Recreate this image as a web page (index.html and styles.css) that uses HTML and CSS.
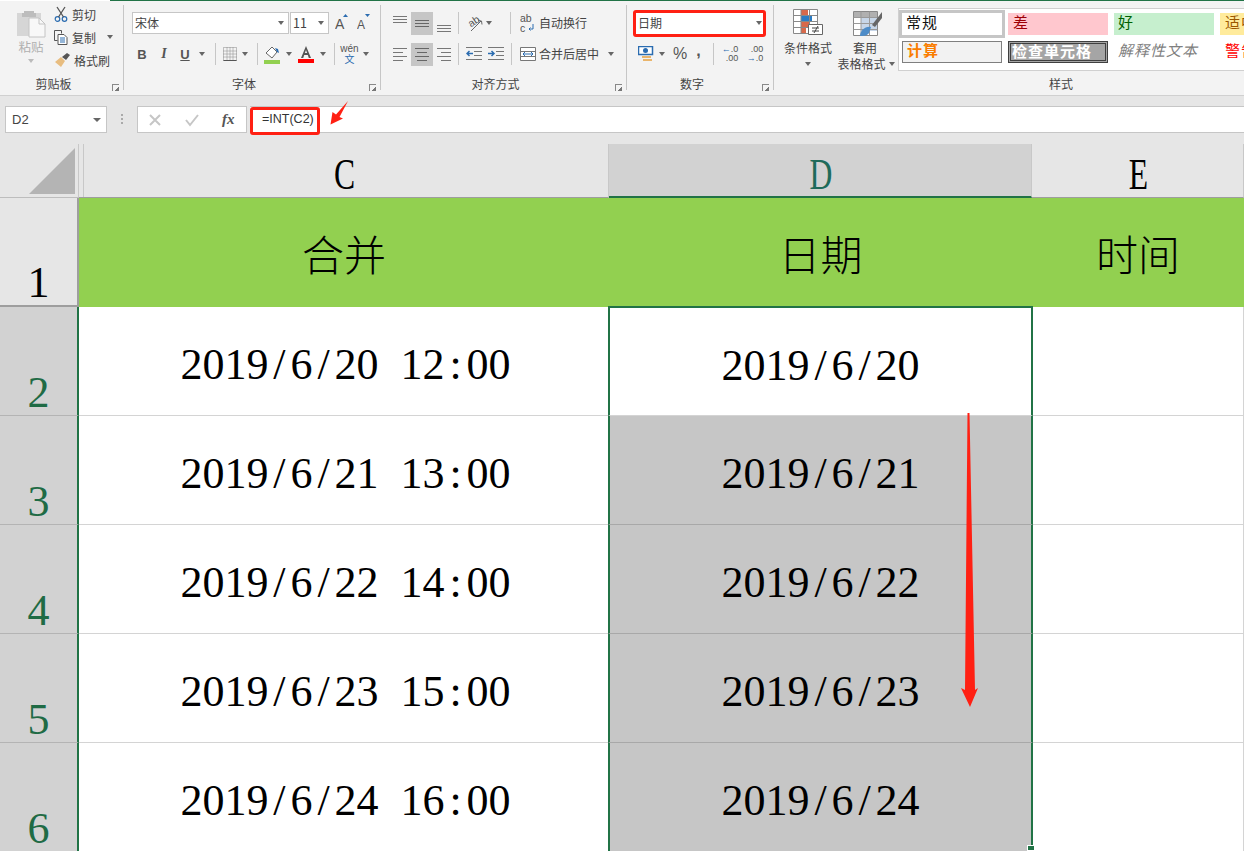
FILE: index.html
```html
<!DOCTYPE html>
<html lang="zh">
<head>
<meta charset="utf-8">
<title>Excel</title>
<link rel="stylesheet" href="styles.css">
</head>
<body>
<div class="app">
  <div class="topline"></div>
  <div class="ribbon">
    <section class="group g-clip">
      <div class="clip-body">
        <div class="paste">
          <svg width="30" height="29" viewBox="0 0 30 29"><path d="M1 4h24v23H1z" fill="#d6d6d6"/><path d="M8 4V2h10v2h2v4H6V4z" fill="#bdbdbd"/><path d="M13 9h10l6 6v13H13z" fill="#f8f8f8" stroke="#c4c4c4"/><path d="M23 9v6h6" fill="none" stroke="#c4c4c4"/></svg>
          <span class="paste-label">粘贴</span>
          <i class="caret caret-light"></i>
        </div>
        <div class="clip-list">
          <div class="clip-item">
            <svg width="14" height="16" viewBox="0 0 14 16"><circle cx="3.5" cy="13" r="2.3" fill="none" stroke="#2b6cb0" stroke-width="1.2"/><circle cx="10.5" cy="13" r="2.3" fill="none" stroke="#2b6cb0" stroke-width="1.2"/><path d="M4.5 11 11 1M9.5 11 3 1" stroke="#555" stroke-width="1.3" fill="none"/></svg>
            <span>剪切</span>
          </div>
          <div class="clip-item">
            <svg width="14" height="15" viewBox="0 0 14 15"><path d="M.5.500h7v3M.5.500v10h3" fill="none" stroke="#555"/><path d="M4 4.500h6l3 3v7H4z" fill="#fff" stroke="#555"/><path d="M6 8h5M6 10h5M6 12h5" stroke="#2b6cb0"/></svg>
            <span>复制</span><i class="caret caret-copy"></i>
          </div>
          <div class="clip-item">
            <svg width="16" height="14" viewBox="0 0 16 14"><path d="M1 9 7 4l4 4-4 6z" fill="#e8bd80"/><path d="M8 4l5-4 3 2-4 5z" fill="#555"/></svg>
            <span>格式刷</span>
          </div>
        </div>
      </div>
      <div class="group-label">剪贴板</div>
      <i class="launcher"></i>
    </section>

    <section class="group g-font">
      <div class="font-row1">
        <div class="select select-font"><span>宋体</span><i class="caret"></i></div>
        <div class="select select-size"><span>11</span><i class="caret"></i></div>
        <svg class="size-btn" width="14" height="18" viewBox="0 0 14 18"><text x="0" y="15" class="icon-a">A</text><path d="M8 3l2.500-3L13 3z" fill="#2b6cb0"/></svg>
        <svg class="size-btn" width="14" height="18" viewBox="0 0 14 18"><text x="0" y="15" class="icon-a small">A</text><path d="M8 0l2.500 3L13 0z" fill="#2b6cb0"/></svg>
      </div>
      <div class="font-row2">
        <b class="fmt">B</b><i class="fmt fmt-i">I</i><u class="fmt">U</u><i class="caret"></i><i class="sep"></i>
        <svg width="14" height="14" viewBox="0 0 14 14"><path d="M.5.500h13v13H.5zM7 .5v13M.5 7h13M4 .5v13M10 .5v13M.5 4h13M.5 10h13" fill="none" stroke="#888" stroke-dasharray="1 1"/><path d="M.5 13.500h13" stroke="#555"/></svg><i class="caret"></i><i class="sep"></i>
        <svg width="17" height="19" viewBox="0 0 17 19"><path d="M2 8 8 2l5 5-5 6z" fill="#fff" stroke="#666"/><path d="M11 3l3 1 1 4-2-1z" fill="#2b6cb0"/><path d="M0 15h16v4H0z" fill="#92d050"/></svg><i class="caret"></i>
        <svg width="16" height="18" viewBox="0 0 16 18"><path d="M3 13 8 1l5 12h-2.200l-1-3H6.200l-1 3zM6.900 8h2.200L8 5z" fill="#555"/><path d="M0 14h16v4H0z" fill="#f00"/></svg><i class="caret"></i><i class="sep"></i>
        <div class="wen"><span class="wen-top">wén</span><span class="wen-bot">文</span></div><i class="caret"></i>
      </div>
      <div class="group-label">字体</div>
      <i class="launcher"></i>
    </section>

    <section class="group g-align">
      <div class="align-row">
        <svg width="14" height="20" viewBox="0 0 14 20"><path d="M0 3.500h14M0 6.500h14M0 9.500h14" stroke="#777"/></svg>
        <div class="pressed"><svg width="14" height="20" viewBox="0 0 14 20"><path d="M0 7.500h14M0 10.500h14M0 13.500h14" stroke="#666"/></svg></div>
        <svg width="14" height="20" viewBox="0 0 14 20"><path d="M0 12.500h14M0 15.500h14M0 18.500h14" stroke="#777"/></svg>
        <i class="sep"></i>
        <svg width="20" height="20" viewBox="0 0 20 20"><text x="3" y="12" class="icon-ab" transform="rotate(-35 8 10)">ab</text><path d="M5 18 15 8M12 7.500l3.500.5.500 3.500" fill="none" stroke="#666"/></svg>
        <i class="caret caret-orient"></i>
        <i class="sep"></i>
        <svg width="16" height="20" viewBox="0 0 16 20"><text x="0" y="9" class="icon-ab">ab</text><text x="0" y="19" class="icon-ab">c</text><path d="M13 11v5H9M10.500 14.500 9 16l1.500 1.500" fill="none" stroke="#2b6cb0"/></svg>
        <span class="align-text">自动换行</span>
      </div>
      <div class="align-row">
        <svg width="14" height="20" viewBox="0 0 14 20"><path d="M0 4.500h14M0 8.500h10M0 12.500h14M0 16.500h10" stroke="#777"/></svg>
        <div class="pressed"><svg width="14" height="20" viewBox="0 0 14 20"><path d="M0 4.500h14M2 8.500h10M0 12.500h14M2 16.500h10" stroke="#666"/></svg></div>
        <svg width="14" height="20" viewBox="0 0 14 20"><path d="M0 4.500h14M4 8.500h10M0 12.500h14M4 16.500h10" stroke="#777"/></svg>
        <i class="sep"></i>
        <svg width="16" height="14" viewBox="0 0 16 14"><path d="M0 .5h16M8 4.500h8M8 8.500h8M0 12.500h16" stroke="#777"/><path d="M7 6.500H1M3.500 4 1 6.500 3.500 9" stroke="#2b6cb0" stroke-width="1.500" fill="none"/></svg>
        <svg class="indent2" width="16" height="14" viewBox="0 0 16 14"><path d="M0 .5h16M8 4.500h8M8 8.500h8M0 12.500h16" stroke="#777"/><path d="M0 6.500h6M3.500 4 6 6.500 3.500 9" stroke="#2b6cb0" stroke-width="1.500" fill="none"/></svg>
        <i class="sep sep-merge"></i>
        <svg width="16" height="14" viewBox="0 0 16 14"><path d="M.5.500h15v13H.5zM.5 4.500h15M.5 9.500h15" fill="#fff" stroke="#777"/><path d="M3 7h10M5 5 3 7l2 2M11 5l2 2-2 2" fill="none" stroke="#2b6cb0"/></svg>
        <span class="align-text">合并后居中</span><i class="caret caret-merge"></i>
      </div>
      <div class="group-label">对齐方式</div>
      <i class="launcher"></i>
    </section>

    <section class="group g-num">
      <div class="select select-num"><span>日期</span><i class="caret"></i></div>
      <div class="num-row">
        <svg width="17" height="16" viewBox="0 0 17 16"><path d="M.5.500h14v8H.5z" fill="#fff" stroke="#2b6cb0" stroke-width="1.500"/><circle cx="7.500" cy="4.500" r="2.500" fill="#2b6cb0"/><path d="M4 10h9v2H4zM5 13h9v2H5z" fill="#eab56b"/></svg><i class="caret"></i>
        <span class="pct">%</span>
        <span class="comma">,</span>
        <i class="sep"></i>
        <div class="dec"><span><em>←</em>.0</span><span>.00</span></div>
        <div class="dec"><span>.00</span><span><em>→</em>.0</span></div>
      </div>
      <div class="group-label">数字</div>
      <i class="launcher"></i>
    </section>

    <section class="group g-style">
      <div class="style-body">
        <div class="big-btn btn-cond">
          <svg width="30" height="26" viewBox="0 0 30 26"><path d="M.5.500h24v24H.5z" fill="#fff" stroke="#888"/><path d="M8 1h7v6H8zM8 19h5v5H8z" fill="#d8694a"/><path d="M8 7h11v5H8z" fill="#2b7cc4"/><path d="M8 12h9v6H8z" fill="#d8694a"/><path d="M8 .5v24M16.500.5v24M.5 6.500h24M.5 12.500h24M.5 18.500h24" stroke="#888" fill="none"/><path d="M15.500 15.500h14v10h-14z" fill="#fff" stroke="#666"/><path d="M19 19h7M19 22h7M25 17l-4 7" stroke="#444" fill="none"/></svg>
          <span class="big-text">条件格式</span>
          <i class="caret"></i>
        </div>
        <div class="big-btn btn-table">
          <svg width="30" height="28" viewBox="0 0 30 28"><path d="M.5 2.500h24v24H.5z" fill="#fff" stroke="#888"/><path d="M1 3h23v5H1z" fill="#b0b0b0"/><path d="M8 8h16v14H8z" fill="#c7d6e8"/><path d="M8 2.500v24M16.500 2.500v24M.5 8.500h24M.5 14.500h24M.5 20.500h24" stroke="#999" fill="none"/><path d="M19 16 29 3v6l-7 9z" fill="#666"/><path d="M7 27c0-5 5-10 11-9l-2 6c-2 3-6 3-9 3z" fill="#4d8cc8"/></svg>
          <span class="big-text">套用</span>
          <span class="big-text big-line">表格格式<i class="caret caret-table"></i></span>
        </div>
        <div class="gallery">
          <div class="gal-cell gal-normal">常规</div>
          <div class="gal-cell gal-bad">差</div>
          <div class="gal-cell gal-good">好</div>
          <div class="gal-cell gal-neutral">适中</div>
          <div class="gal-cell gal-calc">计算</div>
          <div class="gal-cell gal-check">检查单元格</div>
          <div class="gal-cell gal-note">解释性文本</div>
          <div class="gal-cell gal-warn">警告文本</div>
        </div>
      </div>
      <div class="group-label label-style">样式</div>
    </section>
  </div>

  <div class="formula-strip">
    <div class="name-box"><span>D2</span><i class="caret caret-name"></i></div>
    <div class="dots"></div>
    <div class="fx-box">
      <svg width="14" height="14" viewBox="0 0 14 14"><path d="M2 2l10 10M12 2 2 12" stroke="#c6c6c6" stroke-width="2"/></svg>
      <svg width="16" height="14" viewBox="0 0 16 14"><path d="M2 7l4 5 8-10" stroke="#c6c6c6" stroke-width="2" fill="none"/></svg>
      <span class="fx">fx</span>
    </div>
    <div class="formula-input"><span class="formula-text">=INT(C2)</span></div>
  </div>

  <div class="sheet">
    <div class="corner"><svg width="46" height="46" viewBox="0 0 46 46"><path d="M46 0v46H0z" fill="#b4b4b4"/></svg></div>
    <div class="col-head col-first"><span>C</span></div>
    <div class="col-head col-active"><span>D</span></div>
    <div class="col-head"><span>E</span></div>

    <div class="row-head row-first">1</div>
    <div class="title">合并</div>
    <div class="title">日期</div>
    <div class="title">时间</div>

    <div class="row-head row-sel">2</div>
    <div class="cell cell-c">2019<s>/</s>6<s>/</s>20 12<s>:</s>00</div>
    <div class="cell sel-top">2019<s>/</s>6<s>/</s>20</div>
    <div class="cell blank"></div>

    <div class="row-head row-sel">3</div>
    <div class="cell cell-c">2019<s>/</s>6<s>/</s>21 13<s>:</s>00</div>
    <div class="cell sel-fill">2019<s>/</s>6<s>/</s>21</div>
    <div class="cell blank"></div>

    <div class="row-head row-sel">4</div>
    <div class="cell cell-c">2019<s>/</s>6<s>/</s>22 14<s>:</s>00</div>
    <div class="cell sel-fill">2019<s>/</s>6<s>/</s>22</div>
    <div class="cell blank"></div>

    <div class="row-head row-sel">5</div>
    <div class="cell cell-c">2019<s>/</s>6<s>/</s>23 15<s>:</s>00</div>
    <div class="cell sel-fill">2019<s>/</s>6<s>/</s>23</div>
    <div class="cell blank"></div>

    <div class="row-head row-sel">6</div>
    <div class="cell cell-c">2019<s>/</s>6<s>/</s>24 16<s>:</s>00</div>
    <div class="cell sel-fill sel-last">2019<s>/</s>6<s>/</s>24</div>
    <div class="cell blank"></div>
  </div>

  <div class="mark mark-num"></div>
  <div class="mark mark-formula"></div>
  <svg class="arrow-small" width="19" height="26" viewBox="0 0 19 26"><path d="M18 1 9.500 17l3.500 1.500L.5 24.500 2.500 12 6 14.500z" fill="#ff2013"/></svg>
  <svg class="arrow-long" width="20" height="298" viewBox="0 0 20 298"><path d="M8.500 0h2L16 277l3-2-8 19-9-19 4 2z" fill="#ff2013"/></svg>
</div>
</body>
</html>
```

FILE: styles.css
```css
* { box-sizing: border-box; }
html, body { margin: 0; padding: 0; height: 851px; overflow: hidden; background: #fff; }
body { font-family: "Noto Sans CJK SC", "Liberation Sans", sans-serif; font-size: 12px; color: #444; }
.app { position: relative; width: 1244px; height: 851px; overflow: hidden; }

.topline { height: 1px; margin-left: 110px; background: #217346; }
.ribbon { display: flex; height: 95px; background: #f3f3f3; border-bottom: 1px solid #d0d0d0; }
.group { position: relative; height: 85px; margin-top: 4px; border-right: 1px solid #c6c6c6; flex: none; display: flex; flex-direction: column; }
.group-label { position: absolute; left: 0; right: 16px; top: 70px; text-align: center; line-height: 18px; font-size: 12px; color: #444; }
.label-style { left: 50px; right: 0; }
.launcher { position: absolute; right: 4px; top: 79px; width: 7px; height: 7px; border-left: 1px solid #888; border-top: 1px solid #888; background: linear-gradient(135deg, transparent 60%, #777 60%); }
.caret { display: block; flex: none; width: 0; height: 0; border-left: 3.5px solid transparent; border-right: 3.5px solid transparent; border-top: 4px solid #666; }
.caret-light { border-top-color: #bbb; margin-top: 3px; }
.sep { display: block; width: 1px; height: 22px; background: #c6c6c6; }

.g-clip { width: 124px; }
.clip-body { display: flex; padding: 4px 0 0 16px; }
.paste { width: 30px; display: flex; flex-direction: column; align-items: center; }
.paste-label { line-height: 18px; color: #b0b0b0; font-size: 12.500px; }
.clip-list { margin: -4px 0 0 8px; display: flex; flex-direction: column; gap: 5px; }
.clip-item { display: flex; align-items: center; gap: 4px; height: 18px; width: 66px; color: #444; white-space: nowrap; }
.clip-item svg { flex: none; }
.caret-copy { margin-left: 7px; }

.g-font { width: 257px; padding: 7px 0 0 8px; }
.font-row1 { display: flex; align-items: center; height: 22px; }
.select { display: flex; align-items: center; justify-content: space-between; height: 22px; background: #fff; border: 1px solid #c6c6c6; padding: 0 4px 0 2px; color: #444; line-height: 18px; }
.select-font { width: 157px; }
.select-size { width: 39px; margin-left: 1px; font-size: 12.500px; }
.size-btn { margin-left: 6px; flex: none; }
.size-btn + .size-btn { margin-left: 8px; }
.icon-a { font: 14px "Liberation Sans", sans-serif; fill: #555; }
.icon-a.small { font-size: 12px; }
.icon-ab { font: 10.500px "Liberation Sans", sans-serif; fill: #555; }
.font-row2 { margin-top: 9px; display: grid; grid-template-columns: 22px 22px 20px 14px 12px 17px 14px 10px 21px 12px 22px 12px 10px 21px 12px; align-items: center; justify-items: center; height: 22px; margin-left: -1px; }
.fmt { font: 700 13px "Liberation Sans", sans-serif; color: #555; }
.fmt-i { font-family: "Liberation Serif", serif; font-size: 14px; font-style: italic; }
.wen { display: flex; flex-direction: column; align-items: center; line-height: 10px; }
.wen-top { font: 10px/10px "Liberation Sans", sans-serif; color: #555; }
.wen-bot { font-size: 10px; line-height: 10px; color: #2b6cb0; }

.g-align { width: 246px; padding: 6px 0 0 12px; }
.align-row { display: flex; align-items: center; height: 24px; }
.align-row + .align-row { margin-top: 7px; }
.align-row svg { flex: none; }
.pressed { width: 22px; height: 23px; margin: 0 4px; background: #c6c6c6; display: flex; align-items: center; justify-content: center; }
.align-row .sep { margin: 0 7px; }
.align-row .caret-orient { margin: 0; }
.align-row .caret-orient + .sep { margin: 0 9px 0 18px; }
.align-text { margin-left: 3px; white-space: nowrap; line-height: 18px; }
.indent2 { margin-left: 6px; }
.align-row .sep-merge { margin-right: 8px; }
.align-row .caret-merge { margin-left: 9px; }

.g-num { width: 147px; padding: 7px 0 0 7px; }
.select-num { width: 130px; height: 22px; border: 0; padding: 0 3px; margin-left: 1px; }
.num-row { display: flex; align-items: center; height: 22px; margin-top: 9px; padding-left: 4px; }
.num-row .caret { margin-left: 4px; }
.pct { font: 16px "Liberation Sans", sans-serif; margin-left: 8px; color: #555; }
.comma { font: 700 16px "Liberation Sans", sans-serif; margin: -6px 0 0 9px; width: 6px; color: #555; }
.num-row .sep { margin: 0 8px 0 11px; }
.dec { width: 16px; display: flex; flex-direction: column; align-items: flex-end; font: 9px/9px "Liberation Sans", sans-serif; color: #555; }
.dec + .dec { margin-left: 9px; }
.dec em { font-style: normal; color: #2b6cb0; }

.g-style { flex: 1; border-right: 0; }
.style-body { display: flex; padding-top: 1px; }
.big-btn { display: flex; flex-direction: column; align-items: center; flex: none; position: relative; }
.big-text { line-height: 16px; white-space: nowrap; }
.btn-cond { width: 48px; margin: 3px 0 0 10px; }
.btn-cond .big-text { margin-top: 5px; }
.btn-cond .caret { margin-top: 6px; }
.btn-table { width: 48px; margin: 3px 0 0 5px; }
.btn-table svg { margin-left: 14px; }
.btn-table .big-text:first-of-type { margin: 3px 0 0 8px; }
.big-line { display: flex; align-items: center; }
.caret-table { margin: 0 -10px 0 3px; }
.gallery { margin: 2px 0 0 13px; width: 400px; height: 63px; overflow: hidden; background: #fff; border: 1px solid #d0d0d0; display: grid; grid-template-columns: repeat(4, 100px); column-gap: 6px; row-gap: 6px; padding: 4px 0 0 3px; grid-auto-rows: 22px; font-size: 15px; letter-spacing: 1px; }
.gal-cell { padding: 0 0 5px 5px; display: flex; align-items: center; white-space: nowrap; line-height: 19px; }
.gal-normal { color: #111; box-shadow: 0 0 0 3px #c6c6c6; padding-left: 4px; padding-bottom: 6px; }
.gal-bad { background: #ffc7ce; color: #9c0006; }
.gal-good { background: #c6efce; color: #006100; padding-left: 4px; }
.gal-neutral { background: #ffeb9c; color: #9c5700; }
.gal-calc { background: #f2f2f2; border: 1px solid #7f7f7f; color: #fa7d00; font-weight: 700; padding-left: 4px; padding-bottom: 5px; }
.gal-check { background: #a5a5a5; border: 3px double #3f3f3f; color: #fff; font-weight: 700; padding-left: 1px; padding-bottom: 3px; }
.gal-note { color: #7f7f7f; font-style: italic; padding-left: 4px; }
.gal-warn { color: #f00; }

.formula-strip { display: flex; height: 48px; background: #e6e6e6; padding: 10px 0 0 5px; align-items: flex-start; }
.name-box { width: 102px; height: 27px; background: #fff; border: 1px solid #c6c6c6; display: flex; align-items: center; justify-content: space-between; padding: 0 5px 0 6px; font: 13px "Liberation Sans", sans-serif; color: #444; }
.caret-name { border-left-width: 4px; border-right-width: 4px; }
.dots { width: 2px; height: 10px; margin: 8px 14px 0 14px; border-left: 2px dotted #aaa; }
.fx-box { width: 110px; height: 27px; background: #fff; border: 1px solid #c6c6c6; display: flex; align-items: center; padding-left: 10px; gap: 22px; margin-right: 3px; }
.fx { font: italic 700 15px "Liberation Serif", serif; color: #555; }
.formula-input { flex: 1; height: 27px; background: #fff; border-bottom: 1px solid #c6c6c6; border-top: 1px solid #c6c6c6; padding-left: 12px; font: 12.500px/25px "Liberation Sans", sans-serif; color: #333; }

.sheet { display: grid; grid-template-columns: 79px 530px 423px 212px; grid-template-rows: 54px repeat(6, 109px); font-family: "Liberation Serif", serif; color: #000; }
.corner { background: #e6e6e6; border-right: 1px solid #c8c8c8; border-bottom: 1px solid #bdbdbd; padding: 4px 0 0 29px; }
.col-head { background: #e6e6e6; border-right: 1px solid #c8c8c8; border-bottom: 1px solid #9e9e9e; display: flex; justify-content: center; align-items: flex-end; font-size: 44px; line-height: 43px; padding-left: 2px; padding-bottom: 1px; }
.col-head span { display: block; transform: scaleX(.72); }
.col-first { background: linear-gradient(#c8c8c8, #c8c8c8) 4px 0 / 1px 100% no-repeat #e6e6e6; }
.col-active { background: #d2d2d2; color: #1f6b5a; border-bottom: 2px solid #217346; padding-bottom: 0; }
.row-head { background: #e6e6e6; display: flex; justify-content: center; align-items: flex-end; font-size: 44px; line-height: 42px; padding-bottom: 1px; }
.row-first { border-right: 2px solid #9e9e9e; border-bottom: 2px solid #9e9e9e; }
.row-sel { background: #d2d2d2; color: #1f6b45; border-right: 2px solid #217346; border-bottom: 1px solid #b4b4b4; }
.title { background: #92d050; display: flex; align-items: center; justify-content: center; font-family: "Noto Sans CJK SC", sans-serif; font-weight: 300; font-size: 42px; padding-top: 0; }
.cell { background: #fff; border-bottom: 1px solid #d4d4d4; display: block; text-align: center; white-space: pre-wrap; font-size: 44px; word-spacing: 11px; line-height: 100px; padding-top: 8px; }
.cell s { text-decoration: none; margin: 0 4.900px; }
.cell-c { padding-left: 3px; }
.blank { border-right: 1px solid #d4d4d4; }
.sel-top, .sel-fill { border-left: 2px solid #217346; border-right: 2px solid #217346; margin-left: -1px; margin-right: -1px; position: relative; }
.sel-top { border-top: 2px solid #217346; margin-top: -1px; padding-top: 9px; line-height: 98px; }
.sel-fill { background: #c6c6c6; border-bottom-color: #a8a8a8; }
.sel-last::after { content: ""; position: absolute; right: -4px; bottom: 0; width: 6px; height: 4px; background: #217346; border: 1px solid #fff; }

.mark { position: absolute; border: 3px solid #ff2013; border-radius: 3px; }
.mark-num { left: 633px; top: 10px; width: 133px; height: 27px; }
.mark-formula { left: 250px; top: 107px; width: 70px; height: 28px; }
.arrow-small { position: absolute; left: 330px; top: 100px; }
.arrow-long { position: absolute; left: 959px; top: 413px; }
```
